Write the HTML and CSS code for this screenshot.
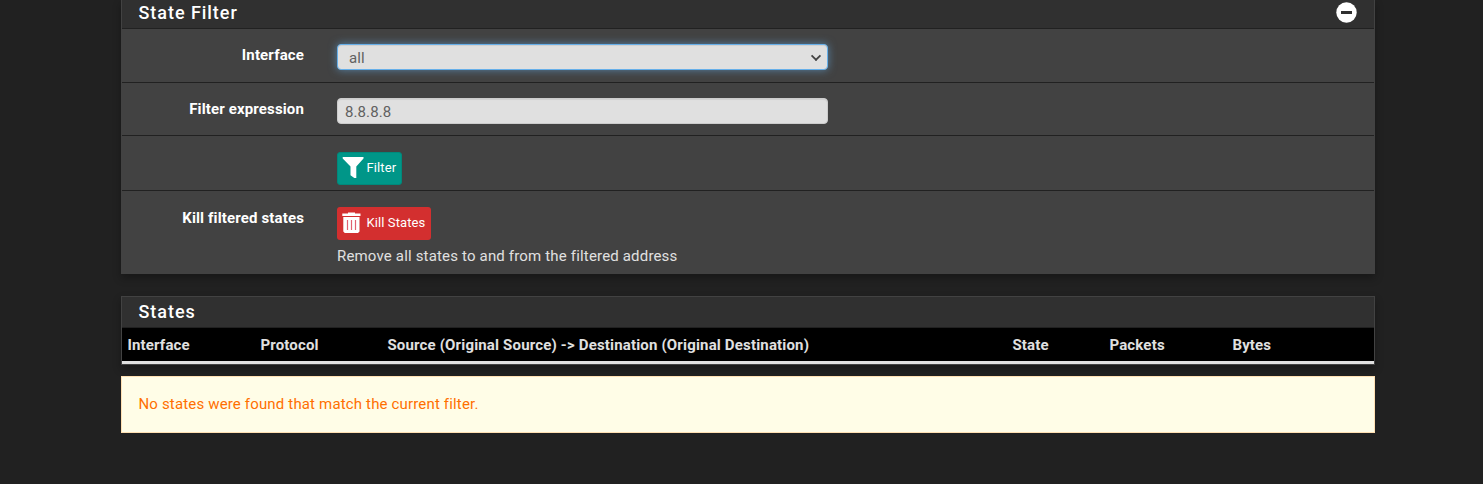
FILE: index.html
```html
<!DOCTYPE html>
<html lang="en">
<head>
    <meta charset="UTF-8">
    <meta name="viewport" content="width=device-width, initial-scale=1.0">
    <title>Diagnostics: States</title>
    <link rel="stylesheet" href="styles.css">
</head>
<body>
    <div class="container">
        <form class="panel filter-panel">
            <div class="panel-heading">
                <h2 class="panel-title">State Filter</h2>
                <svg class="toggle-icon" viewBox="0 0 21 21">
                    <circle cx="10.500" cy="10.500" r="10.200" fill="#fff"/>
                    <rect x="5" y="9" width="11" height="3" fill="#303030"/>
                </svg>
            </div>
            <div class="form-group row-interface">
                <label class="control-label" for="interface">Interface</label>
                <div class="control">
                    <select class="form-control focused" id="interface">
                        <option>all</option>
                    </select>
                </div>
            </div>
            <div class="form-group row-expression">
                <label class="control-label" for="filter">Filter expression</label>
                <div class="control">
                    <input class="form-control" type="text" id="filter" value="8.8.8.8">
                </div>
            </div>
            <div class="form-group row-submit">
                <span class="control-label"></span>
                <div class="control">
                    <button class="btn btn-filter" type="button">
                        <svg class="btn-icon" viewBox="0 0 22 22">
                            <path d="M.7 0h20.800v1.500L14.300 9.500V21h-2L8.500 18.300V9.500L.7 1.500z" fill="#fff"/>
                        </svg>
                        Filter
                    </button>
                </div>
            </div>
            <div class="form-group row-kill">
                <span class="control-label">Kill filtered states</span>
                <div class="control">
                    <button class="btn btn-kill" type="button">
                        <svg class="btn-icon" viewBox="0 0 22 22">
                            <path d="M6 1.500V.5h7v1h5.500v2.500H.3V1.500zM1.300 5h16.200v14.500l-1.500 1.500H2.800L1.300 19.500z" fill="#fff"/>
                            <path d="M5.500 8v10M9.500 8v10M13.500 8v10" stroke="#e06070" stroke-width="1.200"/>
                        </svg>
                        Kill States
                    </button>
                    <span class="help-block">Remove all states to and from the filtered address</span>
                </div>
            </div>
        </form>

        <div class="panel states-panel">
            <div class="panel-heading">
                <h2 class="panel-title">States</h2>
            </div>
            <table class="table">
                <thead>
                    <tr>
                        <th class="col-interface">Interface</th>
                        <th class="col-protocol">Protocol</th>
                        <th class="col-source">Source (Original Source) -&gt; Destination (Original Destination)</th>
                        <th class="col-state">State</th>
                        <th class="col-packets">Packets</th>
                        <th class="col-bytes">Bytes</th>
                    </tr>
                </thead>
            </table>
        </div>

        <div class="alert">No states were found that match the current filter.</div>
    </div>
</body>
</html>
```

FILE: styles.css
```css
* {
    box-sizing: border-box;
}
body {
    margin: 0;
    background-color: #212121;
    color: #e0e0e0;
    font-family: Roboto, "Liberation Sans", sans-serif;
    font-size: 15px;
    line-height: 22px;
    letter-spacing: .17px;
    overflow: hidden;
}
.container {
    width: 1254px;
    margin-left: 121px;
}
.panel {
    border: 1px solid #424242;
    background-color: #424242;
    box-shadow: 0 4px 8px rgba(0,0,0,0.3);
}
.filter-panel {
    height: 274px;
    margin-bottom: 22px;
    border-top: none;
}
.panel-heading {
    display: flex;
    align-items: center;
    justify-content: space-between;
    padding: 0 17px 0 16.5px;
    background-color: #303030;
    border-bottom: 1px solid #212121;
}
.filter-panel .panel-heading {
    height: 29px;
    padding-bottom: 3px;
}
.states-panel .panel-heading {
    height: 31px;
}
.panel-title {
    margin: 0;
    color: #fff;
    font-size: 18px;
    font-weight: 500;
    letter-spacing: .95px;
}
.toggle-icon {
    width: 21px;
    height: 21px;
}
.form-group {
    display: flex;
    border-bottom: 1px solid #212121;
}
.control-label {
    width: 182px;
    margin-right: 33px;
    color: #fff;
    font-weight: 700;
    letter-spacing: .14px;
    text-align: right;
}
.row-interface {
    height: 54px;
    padding-top: 15px;
}
.row-expression {
    height: 53px;
    padding-top: 15px;
}
.row-submit {
    height: 55px;
    padding-top: 16px;
}
.row-kill {
    padding-top: 16px;
    border-bottom: none;
}
.form-control {
    display: block;
    width: 491px;
    height: 26px;
    padding: 2px 7px 0;
    border: 1px solid #ccc;
    border-radius: 4px;
    background-color: #e0e0e0;
    color: #616161;
    font: inherit;
    letter-spacing: .1px;
    box-shadow: inset 0 1px 1px rgba(0,0,0,0.075);
}
select.form-control {
    appearance: none;
    padding-left: 11px;
}
/* select and its arrow share one grid cell */
.row-interface .control {
    display: grid;
}
.row-interface .form-control,
.row-interface .control::after {
    grid-area: 1 / 1;
}
.row-interface .control::after {
    content: "";
    justify-self: end;
    width: 6px;
    height: 6px;
    margin: 8px 8px 0 0;
    border: solid #424242;
    border-width: 0 2px 2px 0;
    transform: rotate(45deg) scale(.9);
    pointer-events: none;
}
.focused {
    outline: none;
    border-color: #66afe9;
    box-shadow: inset 0 1px 1px rgba(0,0,0,0.075), 0 0 8px rgba(102,175,233,0.6);
}
.btn {
    display: flex;
    align-items: center;
    height: 33px;
    padding: 0 4px 2px;
    border: 1px solid transparent;
    border-radius: 3px;
    color: #fff;
    font-family: inherit;
    font-size: 13px;
    letter-spacing: .1px;
}
.btn-icon {
    flex-shrink: 0;
    width: 22px;
    height: 22px;
    margin-right: 2.5px;
}
.btn-filter {
    width: 65px;
    background-color: #009688;
    border-color: #00897b;
}
.btn-kill {
    width: 94px;
    background-color: #d32f2f;
}
.help-block {
    display: block;
    margin-top: 5px;
}
.table {
    width: 100%;
    table-layout: fixed;
    border-collapse: separate;
    border-spacing: 0;
    background-color: #000;
}
.table th {
    height: 36px;
    padding: 0 5px 0 5.4px;
    border-bottom: 3px solid #e0e0e0;
    font-weight: 700;
    text-align: left;
    white-space: nowrap;
}
.col-interface {
    width: 133px;
}
.col-protocol {
    width: 127px;
}
.col-source {
    width: 625px;
}
.col-state {
    width: 97px;
}
.col-packets {
    width: 123px;
}
.alert {
    height: 57px;
    margin-top: 11px;
    padding: 16px 16.5px;
    border: 1px solid #ffe0b2;
    background-color: #fffde7;
    color: #ff6f00;
    letter-spacing: .16px;
}
```
